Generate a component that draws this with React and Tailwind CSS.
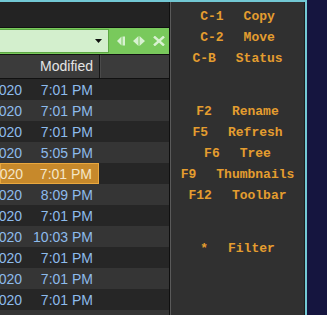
import { useState } from 'react'
import clsx from 'clsx'

const rows = [
  { date: '3/14/2020', time: '7:01 PM' },
  { date: '3/14/2020', time: '7:01 PM' },
  { date: '3/14/2020', time: '7:01 PM' },
  { date: '3/16/2020', time: '5:05 PM' },
  { date: '3/14/2020', time: '7:01 PM' },
  { date: '3/18/2020', time: '8:09 PM' },
  { date: '3/14/2020', time: '7:01 PM' },
  { date: '3/21/2020', time: '10:03 PM' },
  { date: '3/14/2020', time: '7:01 PM' },
  { date: '3/14/2020', time: '7:01 PM' },
  { date: '3/14/2020', time: '7:01 PM' },
  { date: '', time: '' },
]

const groups = [
  [
    ['C-1', 'Copy'],
    ['C-2', 'Move'],
    ['C-B', 'Status'],
  ],
  [
    ['F2', 'Rename'],
    ['F5', 'Refresh'],
    ['F6', 'Tree'],
    ['F9', 'Thumbnails'],
    ['F12', 'Toolbar'],
  ],
  [['*', 'Filter']],
]

function Toolbar() {
  return (
    <div className="h-[27px] flex items-center bg-[#79c95c] border-b border-[#111]">
      <div className="w-[109px] h-[24px] flex items-center justify-end pr-[6px] bg-[#d3efcd] border-y border-r border-[#5da844]">
        <svg width="7" height="4" viewBox="0 0 7 4">
          <path d="M0 0h7L3.5 4z" fill="#111" />
        </svg>
      </div>
      <div className="flex items-center ml-[8px] gap-[8px] text-[#d8f1d1]">
        <svg width="8" height="10" viewBox="0 0 8 10">
          <path d="M0 5L4.5 0.5v9z" fill="currentColor" />
          <rect x="5.5" y="0.5" width="2.5" height="9" fill="currentColor" />
        </svg>
        <svg width="12" height="10" viewBox="0 0 12 10">
          <path d="M0 5L5.5 0v10zM12 5L6.5 0v10z" fill="currentColor" />
        </svg>
        <svg width="12" height="10" viewBox="0 0 12 10">
          <path d="M1 0.5l10 9M11 0.5L1 9.5" stroke="currentColor" strokeWidth="2.4" />
        </svg>
      </div>
    </div>
  )
}

function FileList() {
  const [selected, setSelected] = useState(4)
  return (
    <div className="flex-1 overflow-hidden font-['Liberation_Sans',Arial,sans-serif] text-[14px]">
      {rows.map((r, i) => (
        <div
          key={i}
          onClick={() => setSelected(i)}
          className={clsx(
            'h-[21px] flex items-center',
            i % 2 === 0 ? 'bg-[#262626]' : 'bg-[#353535]'
          )}
        >
          <div
            className={clsx(
              'w-[99px] h-full flex items-center pt-[2px] whitespace-nowrap',
              i === selected
                ? 'bg-[#c7892b] border border-[#eaa83e] text-[#f4e6c8]'
                : 'text-[#8dbbec]'
            )}
          >
            <div className="w-[22px] flex justify-end">{r.date}</div>
            <div className="flex-1 text-right pr-[6px]">{r.time}</div>
          </div>
        </div>
      ))}
    </div>
  )
}

function HelpPanel() {
  return (
    <div className="flex-1 bg-[#303030] border-l border-[#5a5a5a] border-r border-r-[#1c1c1c] pt-[4px] font-['Liberation_Mono',monospace] font-bold text-[13px] leading-[21px] text-[#e49d2f]">
      {groups.map((g, gi) => (
        <div key={gi} className={clsx(gi > 0 && 'mt-[32px]')}>
          {g.map(([k, label]) => (
            <div key={k} className="flex justify-center gap-[20px]">
              <span>{k}</span>
              <span>{label}</span>
            </div>
          ))}
        </div>
      ))}
    </div>
  )
}

export default function App() {
  return (
    <div className="w-[327px] h-[315px] flex overflow-hidden bg-[#15153f]">
      <div className="w-[307px] flex border-t-2 border-r-2 border-[#72c8d4]">
        <div className="w-[170px] flex flex-col bg-[#262626] border-r border-[#0f0f0f]">
          <div className="h-[26px] bg-[#232323] border-b border-[#111]" />
          <Toolbar />
          <div className="h-[24px] flex bg-[#3b3b3b] border-b border-[#111] font-['Liberation_Sans',Arial,sans-serif] text-[14px] text-[#e4e4e4]">
            <div className="w-[100px] flex items-center justify-end pr-[6px] border-r border-[#151515]">
              Modified
            </div>
            <div className="flex-1 border-l border-[#4a4a4a]" />
          </div>
          <FileList />
        </div>
        <HelpPanel />
      </div>
      <div className="flex-1" />
    </div>
  )
}
